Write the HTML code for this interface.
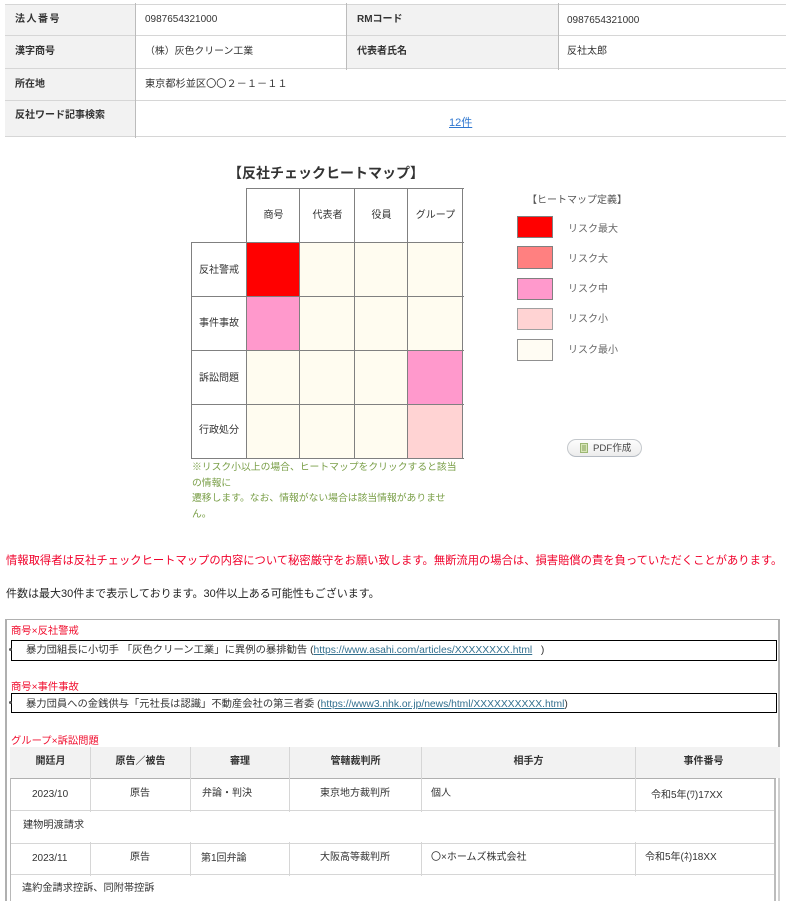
<!DOCTYPE html>
<html lang="ja"><head><meta charset="utf-8"><style>
html,body{margin:0;padding:0;background:#fff}
body{width:792px;height:901px;position:relative;overflow:hidden;font-family:"Liberation Sans","Noto Sans CJK JP",sans-serif;font-size:10px;color:#333}
.b{position:absolute}
.t{position:absolute;white-space:nowrap;line-height:14px}
.h{font-weight:bold;color:#333}
.c{text-align:center}
.r{color:#f00f2f;font-size:10.3px}
a{color:#2f77d0}
a.l{color:#33708f}
</style></head><body>
<!-- top table -->
<div class="b" style="left:5px;top:4px;width:130px;height:132px;background:#f2f2f2"></div>
<div class="b" style="left:347px;top:4px;width:211px;height:64px;background:#f2f2f2"></div>
<div class="b" style="left:5px;top:4px;width:781px;height:1px;background:#d6d6d6"></div>
<div class="b" style="left:5px;top:35px;width:781px;height:1px;background:#d6d6d6"></div>
<div class="b" style="left:5px;top:68px;width:781px;height:1px;background:#d6d6d6"></div>
<div class="b" style="left:5px;top:100px;width:781px;height:1px;background:#d6d6d6"></div>
<div class="b" style="left:5px;top:136px;width:781px;height:1px;background:#d6d6d6"></div>
<div class="b" style="left:135px;top:3px;width:1px;height:135px;background:#bcbcbc"></div>
<div class="b" style="left:346px;top:3px;width:1px;height:67px;background:#bcbcbc"></div>
<div class="b" style="left:558px;top:3px;width:1px;height:67px;background:#bcbcbc"></div>
<div class="t h" style="left:15px;top:13px;letter-spacing:1.5px">法人番号</div>
<div class="t" style="left:145px;top:13px">0987654321000</div>
<div class="t h" style="left:357px;top:13px">RMコード</div>
<div class="t" style="left:567px;top:14px">0987654321000</div>
<div class="t h" style="left:15px;top:45px">漢字商号</div>
<div class="t" style="left:145px;top:45px;font-size:9.9px">（株）灰色クリーン工業</div>
<div class="t h" style="left:357px;top:45px">代表者氏名</div>
<div class="t" style="left:567px;top:45px">反社太郎</div>
<div class="t h" style="left:15px;top:78px">所在地</div>
<div class="t" style="left:145px;top:78px;font-size:10.2px">東京都杉並区〇〇２－１－１１</div>
<div class="t h" style="left:15px;top:109px">反社ワード記事検索</div>
<div class="t" style="left:449px;top:116px;font-size:11px"><a href="#">12件</a></div>
<!-- heatmap title -->
<div class="t h" style="left:228px;top:164px;font-size:14px;line-height:18px;color:#333">【反社チェックヒートマップ】</div>
<!-- heatmap fills -->
<div class="b" style="left:247px;top:243px;width:216px;height:216px;background:#fffcf0"></div>
<div class="b" style="left:247px;top:243px;width:53px;height:53px;background:#f00"></div>
<div class="b" style="left:247px;top:297px;width:53px;height:53px;background:#ff99cc"></div>
<div class="b" style="left:408px;top:351px;width:55px;height:53px;background:#ff99cc"></div>
<div class="b" style="left:408px;top:405px;width:55px;height:54px;background:#ffd3d3"></div>
<!-- heatmap grid -->
<svg class="b" style="left:0;top:0" width="792" height="520" shape-rendering="crispEdges">
<g stroke="#808080" stroke-width="1" fill="none">
<path d="M246.5 188V459M299.5 188V459M354.5 188V459M407.5 188V459M462.5 188V459M191.5 242V459"/>
<path d="M246 188.5H464M191 242.5H464M191 296.5H464M191 350.5H464M191 404.5H464M191 458.5H464"/>
</g></svg>
<div class="t c" style="left:247px;top:209px;width:53px">商号</div>
<div class="t c" style="left:300px;top:209px;width:55px">代表者</div>
<div class="t c" style="left:355px;top:209px;width:53px">役員</div>
<div class="t c" style="left:408px;top:209px;width:55px">グループ</div>
<div class="t c" style="left:192px;top:264px;width:54px">反社警戒</div>
<div class="t c" style="left:192px;top:317px;width:54px">事件事故</div>
<div class="t c" style="left:192px;top:372px;width:54px">訴訟問題</div>
<div class="t c" style="left:192px;top:424px;width:54px">行政処分</div>
<div class="t" style="left:192px;top:460px;font-size:9.8px;line-height:15.5px;color:#7a9f48">※リスク小以上の場合、ヒートマップをクリックすると該当<br>の情報に<br>遷移します。なお、情報がない場合は該当情報がありませ<br>ん。</div>
<!-- legend -->
<div class="t" style="left:527px;top:194px;color:#555">【ヒートマップ定義】</div>
<div class="b" style="left:517px;top:216px;width:34px;height:20px;background:#f00;border:1px solid #808080"></div>
<div class="b" style="left:517px;top:246px;width:34px;height:21px;background:#ff8080;border:1px solid #808080"></div>
<div class="b" style="left:517px;top:278px;width:34px;height:20px;background:#ff99cc;border:1px solid #808080"></div>
<div class="b" style="left:517px;top:308px;width:34px;height:20px;background:#ffd3d3;border:1px solid #a0a0a0"></div>
<div class="b" style="left:517px;top:339px;width:34px;height:20px;background:#fffcf3;border:1px solid #909090"></div>
<div class="t" style="left:568px;top:223px;color:#666">リスク最大</div>
<div class="t" style="left:568px;top:253px;color:#666">リスク大</div>
<div class="t" style="left:568px;top:283px;color:#666">リスク中</div>
<div class="t" style="left:568px;top:313px;color:#666">リスク小</div>
<div class="t" style="left:568px;top:344px;color:#666">リスク最小</div>
<!-- PDF button -->
<div class="b" style="left:567px;top:439px;width:73px;height:16px;border:1px solid #c4c8cc;border-bottom-color:#b4bac2;border-radius:9px;background:linear-gradient(#fdfdfd,#ececec)"></div>
<svg class="b" style="left:580px;top:443px" width="9" height="11" shape-rendering="crispEdges"><rect x="0.5" y="0.5" width="7" height="9" fill="#d8e6b8" stroke="#9cb774"/><path d="M2 3H6M2 5H6M2 7H6" stroke="#86a35c"/></svg>
<div class="t" style="left:593px;top:442px;font-size:9.6px;color:#444">PDF作成</div>
<!-- notices -->
<div class="t" style="left:6px;top:553px;font-size:11.3px;line-height:16px;color:#f0002a">情報取得者は反社チェックヒートマップの内容について秘密厳守をお願い致します。無断流用の場合は、損害賠償の責を負っていただくことがあります。</div>
<div class="t" style="left:6px;top:586px;font-size:11px;line-height:16px;color:#222">件数は最大30件まで表示しております。30件以上ある可能性もございます。</div>
<!-- outer frame -->
<div class="b" style="left:5px;top:619px;width:773px;height:1px;background:#b0b0b0"></div>
<div class="b" style="left:5px;top:619px;width:2px;height:282px;background:#b0b0b0"></div>
<div class="b" style="left:778px;top:619px;width:2px;height:128px;background:#b0b0b0"></div>
<div class="b" style="left:778px;top:778px;width:2px;height:123px;background:#d0d0d0"></div>
<div class="b" style="left:774px;top:778px;width:2px;height:123px;background:#bcbcbc"></div>
<div class="t r" style="left:11px;top:625px">商号×反社警戒</div>
<div class="b" style="left:11px;top:640px;width:764px;height:19px;border:1px solid #000"></div>
<div class="b" style="left:9px;top:648px;width:3px;height:3px;border-radius:50%;background:#555"></div>
<div class="t" style="left:26px;top:644px;font-size:10.33px">暴力団組長に小切手 「灰色クリーン工業」に異例の暴排勧告 (<a class="l" href="#">https://www.asahi.com/articles/XXXXXXXX.html</a>&nbsp;&nbsp; )</div>
<div class="t r" style="left:11px;top:681px">商号×事件事故</div>
<div class="b" style="left:11px;top:693px;width:764px;height:18px;border:1px solid #000"></div>
<div class="b" style="left:9px;top:701px;width:3px;height:3px;border-radius:50%;background:#555"></div>
<div class="t" style="left:26px;top:698px;font-size:10.3px">暴力団員への金銭供与「元社長は認識」不動産会社の第三者委 (<a class="l" href="#">https://www3.nhk.or.jp/news/html/XXXXXXXXXX.html</a>)</div>
<div class="t r" style="left:11px;top:735px">グループ×訴訟問題</div>
<!-- case table -->
<div class="b" style="left:10px;top:747px;width:770px;height:31px;background:#f2f2f2"></div>
<div class="b" style="left:10px;top:778px;width:766px;height:1px;background:#b0b0b0"></div>
<div class="b" style="left:10px;top:778px;width:1px;height:123px;background:#b8b8b8"></div>
<div class="b" style="left:11px;top:810px;width:763px;height:1px;background:#d6d6d6"></div>
<div class="b" style="left:11px;top:843px;width:763px;height:1px;background:#d6d6d6"></div>
<div class="b" style="left:11px;top:874px;width:763px;height:1px;background:#d6d6d6"></div>
<svg class="b" style="left:0;top:0" width="792" height="901" shape-rendering="crispEdges"><path stroke="#d6d6d6" fill="none" d="M90.5 747V812M190.5 747V812M289.5 747V812M421.5 747V812M635.5 747V812M90.5 842V876M190.5 842V876M289.5 842V876M421.5 842V876M635.5 842V876"/></svg>
<div class="t h c" style="left:11px;top:755px;width:79px">開廷月</div>
<div class="t h c" style="left:91px;top:755px;width:99px">原告／被告</div>
<div class="t h c" style="left:191px;top:755px;width:98px">審理</div>
<div class="t h c" style="left:290px;top:755px;width:131px">管轄裁判所</div>
<div class="t h c" style="left:422px;top:755px;width:213px">相手方</div>
<div class="t h c" style="left:636px;top:755px;width:135px">事件番号</div>
<div class="t" style="left:32px;top:788px">2023/10</div>
<div class="t" style="left:130px;top:787px">原告</div>
<div class="t" style="left:202px;top:787px">弁論・判決</div>
<div class="t" style="left:320px;top:787px">東京地方裁判所</div>
<div class="t" style="left:431px;top:787px">個人</div>
<div class="t" style="left:651px;top:789px">令和5年(ﾜ)17XX</div>
<div class="t" style="left:23px;top:819px;font-size:10.2px">建物明渡請求</div>
<div class="t" style="left:32px;top:852px">2023/11</div>
<div class="t" style="left:130px;top:851px">原告</div>
<div class="t" style="left:201px;top:852px">第1回弁論</div>
<div class="t" style="left:320px;top:851px">大阪高等裁判所</div>
<div class="t" style="left:431px;top:851px">〇×ホームズ株式会社</div>
<div class="t" style="left:645px;top:851px">令和5年(ﾈ)18XX</div>
<div class="t" style="left:22px;top:882px;font-size:10.2px">違約金請求控訴、同附帯控訴</div>
</body></html>
